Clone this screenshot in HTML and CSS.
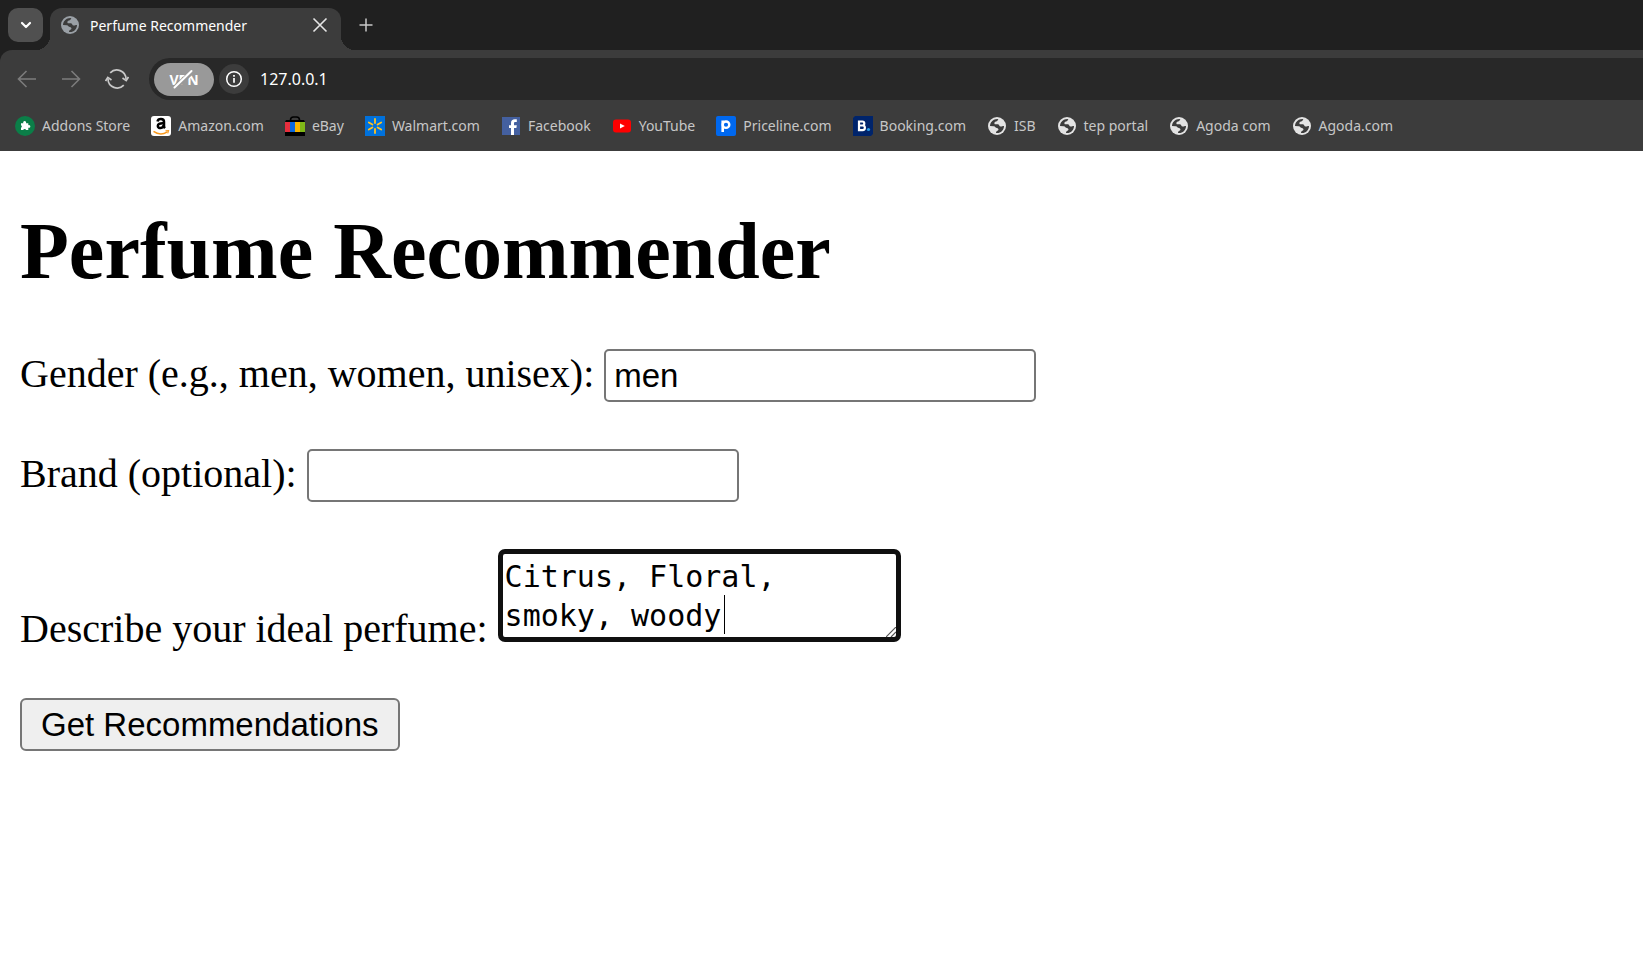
FILE: index.html
```
<!DOCTYPE html>
<html lang="en">
<head>
<meta charset="utf-8">
<title>Perfume Recommender</title>
<link rel="stylesheet" href="styles.css">
</head>
<body>
<svg class="sprite" aria-hidden="true">
  <symbol id="globe" viewBox="0 0 18 18">
    <circle cx="9" cy="9" r="9" fill="currentColor"/>
    <path class="land" d="M10.500 2 C9.500 2.600 10 3.800 8.800 4.300 C7.400 4.800 6.200 5 6.400 6.400 C6.800 7.800 8.600 7 10 7.200 C11.600 7.400 11 9.400 12.600 9.600 C14.200 9.800 14.800 8.600 16 9 C16 13 12.800 16.200 9 16.100 L8 16 C8 14.800 8.600 14.200 9.800 13.600 C11 13 10.600 11.200 9 11 C7.400 10.800 7.400 9.400 5.800 9.200 L2 9 C2 8 2.400 6.400 3 5.400 C4.600 2.800 7.600 1.700 10.500 2 Z"/>
  </symbol>
</svg>

<header class="browser">
  <div class="tabs">
    <button class="tab-search" type="button" aria-label="Search tabs">
      <svg width="12" height="8" viewBox="0 0 12 8"><path d="M2 2l4 4 4-4" fill="none" stroke="#fff" stroke-width="2.2" stroke-linecap="round" stroke-linejoin="round"/></svg>
    </button>
    <div class="tab">
      <svg class="tab-globe" width="18" height="18"><use href="#globe"/></svg>
      <span class="tab-title">Perfume Recommender</span>
      <button class="plain" type="button" aria-label="Close tab">
        <svg width="16" height="16" viewBox="0 0 16 16"><path d="M1.500 1.500l13 13M14.500 1.500l-13 13" stroke="#e6e6e6" stroke-width="1.600"/></svg>
      </button>
    </div>
    <button class="plain new-tab" type="button" aria-label="New tab">
      <svg width="14" height="14" viewBox="0 0 14 14"><path d="M7 .5v13M.5 7h13" stroke="#c8c8c8" stroke-width="1.500"/></svg>
    </button>
  </div>

  <div class="toolbar">
    <nav class="nav" aria-label="History">
      <button class="plain" type="button" aria-label="Back">
        <svg width="20" height="18" viewBox="0 0 20 18"><path d="M19 9H2M9.500 1L1.500 9l8 8" fill="none" stroke="#7c7c7c" stroke-width="1.600"/></svg>
      </button>
      <button class="plain" type="button" aria-label="Forward">
        <svg width="20" height="18" viewBox="0 0 20 18"><path d="M1 9h17M10.500 1l8 8-8 8" fill="none" stroke="#7c7c7c" stroke-width="1.600"/></svg>
      </button>
      <button class="plain" type="button" aria-label="Reload">
        <svg width="24" height="20" viewBox="0 0 24 20"><path d="M5.200 3.800A9.200 9.200 0 0 1 21 10M18.800 16.200A9.200 9.200 0 0 1 3 10" fill="none" stroke="#c8c8c8" stroke-width="1.700"/><path d="M17.500 9l3.700 2.600L23.400 8M.6 12L2.800 8.400 6.500 11" fill="none" stroke="#c8c8c8" stroke-width="1.700"/></svg>
      </button>
    </nav>
    <div class="address">
      <button class="vpn" type="button">VPN
        <svg class="slash" width="24" height="24" viewBox="0 0 24 24"><path d="M3 21.500L22 4" stroke="#999" stroke-width="5"/><path d="M3.500 20.500L20.500 4" stroke="#fff" stroke-width="2" stroke-linecap="round"/></svg>
      </button>
      <button class="info" type="button" aria-label="Site information">
        <svg width="18" height="18" viewBox="0 0 18 18"><circle cx="9" cy="9" r="7.300" fill="none" stroke="#fff" stroke-width="1.500"/><path d="M9 8v4.800M9 5v1.700" stroke="#fff" stroke-width="1.700"/></svg>
      </button>
      <input class="url" type="text" value="127.0.0.1" aria-label="Address">
    </div>
  </div>

  <nav class="bookmarks" aria-label="Bookmarks">
    <a href="#"><svg width="20" height="20" viewBox="0 0 20 20"><circle cx="10" cy="10" r="10" fill="#0b7e48"/><path d="M6 7.200h2.300a1.500 1.500 0 1 1 2.700 0h2.300v2a1.400 1.400 0 1 1 0 2.500v2.300h-2.200a1.500 1.500 0 0 0-2.900 0H6v-2.300a1.300 1.300 0 0 0 0-2.400z" fill="#fff"/></svg>Addons Store</a>
    <a href="#"><svg width="20" height="20" viewBox="0 0 20 20"><rect width="20" height="20" rx="3" fill="#fff"/><path d="M6.500 5.500C7.200 2.200 13 2.200 13 5.800v4.400c0 1 .5 1.500 1 2M12.500 7.200C8.500 7 6.800 8 6.800 10c0 3 5.700 2.800 5.800-1" fill="none" stroke="#000" stroke-width="2.500"/><path d="M2.500 15.300c4.500 3.200 9.500 3.200 13.500.8" fill="none" stroke="#f7981d" stroke-width="1.500"/><path d="M14.500 14.800l3-.2-.8 2.700" fill="none" stroke="#f7981d" stroke-width="1.200"/></svg>Amazon.com</a>
    <a href="#"><svg width="20" height="20" viewBox="0 0 20 20"><path d="M5.500 5V4a3 3 0 0 1 3-3h3a3 3 0 0 1 3 3v1" fill="none" stroke="#000" stroke-width="1.600"/><path fill="#000" d="M1 4h18l1 2v14H0V6z"/><path fill="#e62e3d" d="M0 6h5v10H0z"/><path fill="#0a68e0" d="M5 6h5v10H5z"/><path fill="#f9b400" d="M10 6h5v10h-5z"/><path fill="#7fb717" d="M15 6h5v10h-5z"/></svg>eBay</a>
    <a href="#"><svg width="20" height="20" viewBox="0 0 20 20"><path fill="#0071dc" d="M0 0h20v20H0z"/><path d="M10 3v4M10 13v4M3.800 6.500l3.600 2M12.600 11.500l3.600 2M3.800 13.500l3.600-2M12.600 8.500l3.600-2" stroke="#ffc220" stroke-width="1.800" stroke-linecap="round"/></svg>Walmart.com</a>
    <a href="#"><svg width="20" height="20" viewBox="0 0 20 20"><path fill="#4460a0" d="M1 1h18v18H1z"/><path fill="#fff" d="M10 19v-7H8V9.200h2V7c0-2.600 1.600-3.800 3.800-3.800h2V6h-1.400c-1 0-1.400.5-1.400 1.400v1.800h2.800L15.400 12H13v7z"/></svg>Facebook</a>
    <a href="#"><svg width="20" height="20" viewBox="0 0 20 20"><rect x="1" y="3.500" width="18" height="13" rx="3" fill="#f00"/><path fill="#fff" d="M8 7.500l4.800 2.500L8 12.500z"/></svg>YouTube</a>
    <a href="#"><svg width="20" height="20" viewBox="0 0 20 20"><rect width="20" height="20" rx="2" fill="#0068ef"/><path d="M6.700 4.500V16" fill="none" stroke="#fff" stroke-width="2.600"/><ellipse cx="10" cy="8.700" rx="3.300" ry="3.200" fill="none" stroke="#fff" stroke-width="2.400"/></svg>Priceline.com</a>
    <a href="#"><svg width="20" height="20" viewBox="0 0 20 20"><path fill="#00246b" d="M2 0h18v18l-2 2H0V2z"/><path d="M6 5.500h3.300a1.900 1.900 0 0 1 0 4H6h3.600a2.300 2.300 0 0 1 0 4.600H6z" fill="none" stroke="#fff" stroke-width="2.200"/><circle cx="15.500" cy="13.500" r="1.600" fill="#2a9fe8"/></svg>Booking.com</a>
    <a href="#"><svg width="20" height="20"><use href="#globe" x="1" y="1" width="18" height="18"/></svg>ISB</a>
    <a href="#"><svg width="20" height="20"><use href="#globe" x="1" y="1" width="18" height="18"/></svg>tep portal</a>
    <a href="#"><svg width="20" height="20"><use href="#globe" x="1" y="1" width="18" height="18"/></svg>Agoda com</a>
    <a href="#"><svg width="20" height="20"><use href="#globe" x="1" y="1" width="18" height="18"/></svg>Agoda.com</a>
  </nav>
</header>

<main class="page">
  <h1>Perfume Recommender</h1>
  <form class="form">
    <div class="field">
      <label for="gender">Gender (e.g., men, women, unisex):</label>
      <input class="text-box" id="gender" type="text" value="men">
    </div>
    <div class="field">
      <label for="brand">Brand (optional):</label>
      <input class="text-box" id="brand" type="text">
    </div>
    <div class="field field-notes">
      <label for="notes">Describe your ideal perfume:</label>
      <div class="notes-wrap">
        <textarea id="notes" rows="2" spellcheck="false">Citrus, Floral,
smoky, woody</textarea>
        <span class="caret"></span>
        <svg class="grip" width="10" height="10" viewBox="0 0 10 10"><path d="M0 10L10 0M5 10l5-5" stroke="#555" stroke-width="1.200"/></svg>
      </div>
    </div>
    <button class="submit" type="button">Get Recommendations</button>
  </form>
</main>
</body>
</html>
```
FILE: styles.css
```
* { box-sizing: border-box; }

body {
  margin: 0;
  background: #fff;
  color: #000;
  font-family: "Liberation Serif", "Times New Roman", serif;
}

.sprite { position: absolute; width: 0; height: 0; }
.land { fill: #3c3c3c; }

/* Browser frame */
.browser {
  background: linear-gradient(#202020 70px, #3c3c3c 70px);
  color: #fff;
  font-family: "Noto Sans", "Segoe UI", sans-serif;
  font-size: 14px;
}

.browser svg { display: block; flex: none; }

.plain {
  padding: 0;
  border: 0;
  background: none;
}

.tabs {
  display: flex;
  height: 50px;
  padding: 8px 8px 0;
}

.tab-search {
  display: grid;
  place-items: center;
  width: 35px;
  height: 34px;
  padding: 0;
  border: 0;
  border-radius: 10px;
  background: #505050;
}

.tab {
  position: relative;
  display: flex;
  align-items: center;
  width: 291px;
  margin-left: 7px;
  padding: 0 13px 8px 11px;
  border-radius: 12px 12px 0 0;
  background: #3c3c3c;
}

.tab::before,
.tab::after {
  content: "";
  position: absolute;
  bottom: 0;
  width: 14px;
  height: 14px;
}

.tab::before {
  right: 100%;
  background: radial-gradient(circle at 0 0, transparent 14px, #3c3c3c 14px);
}

.tab::after {
  left: 100%;
  background: radial-gradient(circle at 100% 0, transparent 14px, #3c3c3c 14px);
}

.tab-globe { color: #9aa0a6; }

.tab-title {
  flex: 1;
  margin-left: 11px;
}

.new-tab {
  align-self: flex-start;
  margin: 10px 0 0 18px;
}

.toolbar {
  display: flex;
  align-items: center;
  height: 58px;
  padding-left: 17px;
  border-top-left-radius: 12px;
  background: #3c3c3c;
}

.nav {
  display: flex;
  gap: 24px;
  margin-right: 20px;
}

.address {
  display: flex;
  flex: 1;
  align-items: center;
  height: 42px;
  padding-left: 5px;
  border-radius: 21px 0 0 21px;
  background: #282828;
}

.vpn {
  position: relative;
  width: 60px;
  height: 33px;
  padding: 0;
  border: 0;
  border-radius: 17px;
  background: #999;
  color: #fff;
  font: bold 14px "Noto Sans", sans-serif;
}

.slash {
  position: absolute;
  top: 4px;
  left: 17px;
}

.info {
  display: grid;
  place-items: center;
  width: 30px;
  height: 30px;
  margin-left: 5px;
  padding: 0;
  border: 0;
  border-radius: 50%;
  background: #3c3c3c;
}

.url {
  flex: 1;
  min-width: 0;
  margin-left: 11px;
  padding: 0;
  border: 0;
  background: none;
  color: #fff;
  font: 16px "Noto Sans", sans-serif;
}

.bookmarks {
  display: flex;
  align-items: center;
  gap: 21px;
  height: 43px;
  padding: 0 15px 8px;
  overflow: hidden;
  background: #3c3c3c;
}

.bookmarks a {
  display: flex;
  align-items: center;
  gap: 7px;
  height: 20px;
  color: #c7c7c7;
  text-decoration: none;
  white-space: nowrap;
}

.bookmarks svg { color: #e3e3e3; }

/* Page */
.page { padding: 54px 20px 20px; }

h1 {
  margin: 0 0 52px;
  font-size: 80px;
  line-height: 92px;
}

.form { font-size: 40px; line-height: 46px; }

.field {
  display: flex;
  flex-wrap: wrap;
  align-items: baseline;
  column-gap: 10px;
  margin-bottom: 47px;
}

.text-box {
  width: 432px;
  height: 53px;
  padding: 2px 8px;
  border: 2px solid #767676;
  border-radius: 5px;
  background: #fff;
  color: #000;
  font: 33px "Liberation Sans", Arial, sans-serif;
}

.field-notes {
  align-items: flex-end;
  margin-bottom: 56px;
}

.field-notes label { margin-bottom: -10px; }

.notes-wrap { position: relative; width: 403px; }

textarea {
  display: block;
  width: 100%;
  height: 93px;
  padding: 3px 2px;
  overflow: hidden;
  border: 5px solid #101010;
  border-radius: 7px;
  outline: none;
  resize: none;
  background: #fff;
  color: #000;
  font: 30px/39px "DejaVu Sans Mono", Consolas, monospace;
}

.caret {
  position: absolute;
  top: 46px;
  left: 226px;
  width: 1px;
  height: 39px;
  background: #000;
}

.grip {
  position: absolute;
  right: 5px;
  bottom: 5px;
}

.submit {
  display: block;
  height: 53px;
  padding: 0 19px;
  border: 2px solid #767676;
  border-radius: 6px;
  background: #efefef;
  color: #000;
  font: 33px "Liberation Sans", Arial, sans-serif;
}
```
